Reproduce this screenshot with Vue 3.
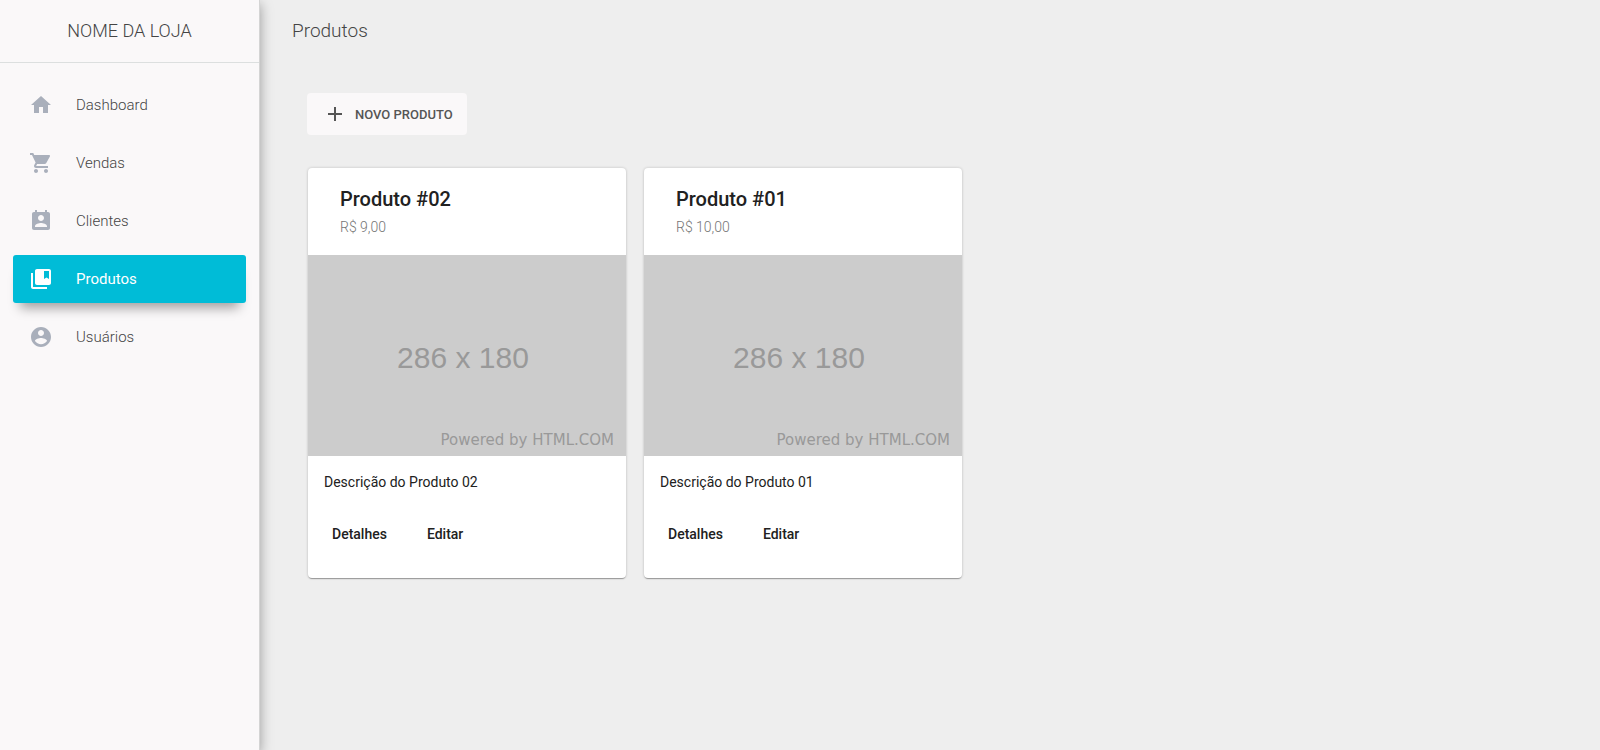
<script setup>
import { ref } from 'vue'

const active = ref('Produtos')

const menu = [
  { label: 'Dashboard', icon: 'M10 20v-6h4v6h5v-8h3L12 3 2 12h3v8z' },
  {
    label: 'Vendas',
    icon: 'M7 18c-1.1 0-1.99.9-1.99 2S5.9 22 7 22s2-.9 2-2-.9-2-2-2zM1 2v2h2l3.6 7.59-1.35 2.45c-.16.28-.25.61-.25.96 0 1.1.9 2 2 2h12v-2H7.42c-.14 0-.25-.11-.25-.25l.03-.12.9-1.63h7.45c.75 0 1.41-.41 1.75-1.03l3.58-6.49c.08-.14.12-.31.12-.48 0-.55-.45-1-1-1H5.21l-.94-2H1zm16 16c-1.1 0-1.99.9-1.99 2s.89 2 1.99 2 2-.9 2-2-.9-2-2-2z',
  },
  {
    label: 'Clientes',
    icon: 'M19 3h-1V1h-2v2H8V1H6v2H5c-1.11 0-2 .9-2 2v14c0 1.1.89 2 2 2h14c1.1 0 2-.9 2-2V5c0-1.1-.9-2-2-2zm-7 3c1.66 0 3 1.34 3 3s-1.34 3-3 3-3-1.34-3-3 1.34-3 3-3zm6 12H6v-1c0-2 4-3.1 6-3.1s6 1.1 6 3.1v1z',
  },
  {
    label: 'Produtos',
    icon: 'M4 6H2v14c0 1.1.9 2 2 2h14v-2H4V6zm16-4H8c-1.1 0-2 .9-2 2v12c0 1.1.9 2 2 2h12c1.1 0 2-.9 2-2V4c0-1.1-.9-2-2-2zm0 10l-2.5-1.5L15 12V4h5v8z',
  },
  {
    label: 'Usuários',
    icon: 'M12 2C6.48 2 2 6.48 2 12s4.48 10 10 10 10-4.48 10-10S17.52 2 12 2zm0 3c1.66 0 3 1.34 3 3s-1.34 3-3 3-3-1.34-3-3 1.34-3 3-3zm0 14.2c-2.5 0-4.71-1.28-6-3.22.03-1.99 4-3.08 6-3.08 1.99 0 5.97 1.09 6 3.08-1.29 1.94-3.5 3.22-6 3.22z',
  },
]

const products = [
  { name: 'Produto #02', price: 'R$ 9,00', text: 'Descrição do Produto 02' },
  { name: 'Produto #01', price: 'R$ 10,00', text: 'Descrição do Produto 01' },
]
</script>

<template>
  <div class="layout">
    <aside class="sidebar">
      <a class="brand" href="#">NOME DA LOJA</a>
      <nav class="menu">
        <a
          v-for="item in menu"
          :key="item.label"
          href="#"
          class="menu-item"
          :class="{ active: item.label === active }"
          @click.prevent="active = item.label"
        >
          <svg viewBox="0 0 24 24" aria-hidden="true"><path :d="item.icon" /></svg>
          <span>{{ item.label }}</span>
        </a>
      </nav>
    </aside>

    <main class="main">
      <header class="topbar">
        <h1>Produtos</h1>
      </header>
      <section class="content">
        <button class="new-product" type="button">
          <svg viewBox="0 0 24 24" aria-hidden="true"><path d="M19 13h-6v6h-2v-6H5v-2h6V5h2v6h6v2z" /></svg>
          <span>NOVO PRODUTO</span>
        </button>
        <div class="cards">
          <article v-for="product in products" :key="product.name" class="card">
            <header class="card-header">
              <h2>{{ product.name }}</h2>
              <p>{{ product.price }}</p>
            </header>
            <div class="placeholder">
              <span class="dimensions">286 x 180</span>
              <span class="credit">Powered by HTML.COM</span>
            </div>
            <p class="description">{{ product.text }}</p>
            <div class="actions">
              <button type="button">Detalhes</button>
              <button type="button">Editar</button>
            </div>
          </article>
        </div>
      </section>
    </main>
  </div>
</template>

<style>
body {
  background: #eee;
}
</style>

<style scoped>
.layout {
  display: flex;
  min-height: 100vh;
  font-family: Roboto, "Liberation Sans", sans-serif;
  background: #eee;
}

.sidebar {
  box-sizing: border-box;
  flex: 0 0 260px;
  border-right: 1px solid #d4d4d4;
  background: #faf8f9;
  box-shadow: 0 4px 12px rgba(0, 0, 0, 0.36);
}

.brand {
  display: block;
  padding: 16px 0;
  border-bottom: 1px solid #dcdfdf;
  color: #444;
  font-size: 18px;
  font-weight: 300;
  line-height: 30px;
  text-align: center;
  text-decoration: none;
}

.menu {
  display: flex;
  flex-direction: column;
  gap: 10px;
  padding: 18px 13px;
}

.menu-item {
  display: flex;
  align-items: center;
  gap: 23px;
  height: 48px;
  padding: 0 16px;
  border-radius: 3px;
  color: #444;
  font-size: 15px;
  font-weight: 300;
  text-decoration: none;
}

.menu-item svg {
  width: 24px;
  height: 24px;
  fill: #a9afbb;
}

.menu-item.active {
  background: #00bcd7;
  box-shadow: 0 12px 12px -7px rgba(0, 0, 0, 0.36);
  color: #fff;
  font-weight: 400;
}

.menu-item.active svg {
  fill: #fff;
}

.main {
  flex: 1;
  min-width: 0;
}

.topbar {
  padding: 16px 32px;
}

.topbar h1 {
  margin: 0;
  color: #444;
  font-size: 19px;
  font-weight: 300;
  line-height: 30px;
}

.content {
  padding: 31px 47px;
}

.new-product {
  display: flex;
  align-items: center;
  gap: 8px;
  height: 42px;
  padding: 0 14px 0 16px;
  border: 0;
  border-radius: 4px;
  background: #faf8f9;
  color: #555;
  font-family: inherit;
  font-size: 13px;
  font-weight: 500;
}

.new-product svg {
  width: 24px;
  height: 24px;
  fill: #555;
}

.cards {
  display: flex;
  flex-wrap: wrap;
  gap: 18px;
  padding: 33px 1px;
}

.card {
  flex: 0 1 318px;
  border-radius: 4px;
  background: #fff;
  box-shadow: 0 2px 1px -1px rgba(0, 0, 0, 0.2), 0 1px 1px rgba(0, 0, 0, 0.14), 0 0 3px rgba(0, 0, 0, 0.2);
}

.card-header {
  padding: 16px 32px 14px;
}

.card-header h2 {
  margin: 0;
  color: #212121;
  font-size: 20px;
  font-weight: 500;
  line-height: 30px;
}

.card-header p {
  margin: 0;
  color: #757575;
  font-size: 14px;
  font-weight: 300;
  line-height: 27px;
}

.placeholder {
  position: relative;
  box-sizing: border-box;
  display: grid;
  place-items: center;
  height: 201px;
  padding: 4px 8px 0 0;
  background: #ccc;
  color: #999;
}

.dimensions {
  font-family: "Liberation Sans Narrow", "Liberation Sans", sans-serif;
  font-size: 30px;
}

.credit {
  position: absolute;
  right: 12px;
  bottom: 7px;
  font-family: "DejaVu Sans", sans-serif;
  font-size: 15px;
  line-height: 17px;
}

.description {
  margin: 0;
  padding: 16px 16px 24px;
  color: #212121;
  font-size: 14px;
  font-weight: 400;
  line-height: 20px;
}

.actions {
  display: flex;
  gap: 24px;
  padding: 0 16px 26px;
}

.actions button {
  height: 36px;
  padding: 0 8px;
  border: 0;
  background: none;
  color: #212121;
  font-family: inherit;
  font-size: 14px;
  font-weight: 500;
}
</style>
